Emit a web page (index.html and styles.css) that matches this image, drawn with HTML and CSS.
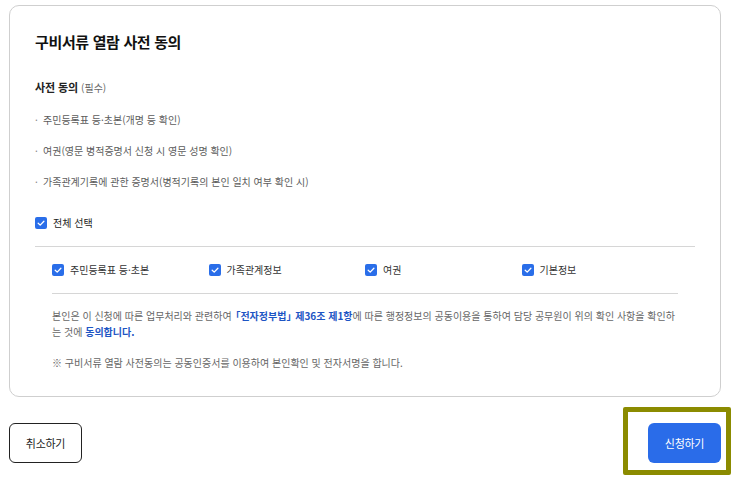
FILE: index.html
```html
<!DOCTYPE html>
<html lang="ko">
<head>
<meta charset="utf-8">
<title>구비서류 열람 사전 동의</title>
<link rel="stylesheet" href="styles.css">
</head>
<body>
<div class="page">
  <section class="card">
    <h1 class="title">구비서류 열람 사전 동의</h1>
    <h2 class="subtitle">사전 동의 <span class="req">(필수)</span></h2>
    <ul class="bullets">
      <li>주민등록표 등·초본(개명 등 확인)</li>
      <li>여권(영문 병적증명서 신청 시 영문 성명 확인)</li>
      <li>가족관계기록에 관한 증명서(병적기록의 본인 일치 여부 확인 시)</li>
    </ul>
    <label class="check all">
      <span class="box"><svg viewBox="0 0 12 12" width="12" height="12"><path d="M3.2 6.2 L5.2 8.1 L8.9 4.2" fill="none" stroke="#fff" stroke-width="1.3" stroke-linecap="round" stroke-linejoin="round"/></svg></span>
      <span>전체 선택</span>
    </label>
    <div class="divider"></div>
    <div class="sub">
      <div class="grid">
        <label class="check"><span class="box"><svg viewBox="0 0 12 12" width="12" height="12"><path d="M3.2 6.2 L5.2 8.1 L8.9 4.2" fill="none" stroke="#fff" stroke-width="1.3" stroke-linecap="round" stroke-linejoin="round"/></svg></span><span>주민등록표 등·초본</span></label>
        <label class="check"><span class="box"><svg viewBox="0 0 12 12" width="12" height="12"><path d="M3.2 6.2 L5.2 8.1 L8.9 4.2" fill="none" stroke="#fff" stroke-width="1.3" stroke-linecap="round" stroke-linejoin="round"/></svg></span><span>가족관계정보</span></label>
        <label class="check"><span class="box"><svg viewBox="0 0 12 12" width="12" height="12"><path d="M3.2 6.2 L5.2 8.1 L8.9 4.2" fill="none" stroke="#fff" stroke-width="1.3" stroke-linecap="round" stroke-linejoin="round"/></svg></span><span>여권</span></label>
        <label class="check"><span class="box"><svg viewBox="0 0 12 12" width="12" height="12"><path d="M3.2 6.2 L5.2 8.1 L8.9 4.2" fill="none" stroke="#fff" stroke-width="1.3" stroke-linecap="round" stroke-linejoin="round"/></svg></span><span>기본정보</span></label>
      </div>
      <div class="divider"></div>
      <p class="para">본인은 이 신청에 따른 업무처리와 관련하여 <b><span class="lb">「</span>전자정부법<span class="rb">」</span> 제36조 제1항</b>에 따른 행정정보의 공동이용을 통하여 담당 공무원이 위의 확인 사항을 확인하는 것에 <b>동의합니다.</b></p>
      <p class="note">※ 구비서류 열람 사전동의는 공동인증서를 이용하여 본인확인 및 전자서명을 합니다.</p>
    </div>
  </section>
  <div class="actions">
    <button class="btn cancel" type="button">취소하기</button>
    <div class="submit-wrap">
      <button class="btn submit" type="button">신청하기</button>
      <span class="highlight"></span>
    </div>
  </div>
</div>
</body>
</html>
```
FILE: styles.css
```css
* { box-sizing: border-box; }
html, body { margin: 0; padding: 0; background: #fff; }
body {
  font-family: "Noto Sans CJK KR", "Noto Sans", sans-serif;
  color: #222;
  min-height: 484px;
}
.page {
  padding: 5px 13px 0 9px;
}
.card {
  border: 1px solid #cfcfcf;
  border-radius: 10px;
  padding: 26px 25px 25px;
}
.title {
  margin: 0;
  font-size: 15px;
  line-height: 20px;
  font-weight: 700;
  letter-spacing: -0.35px;
  color: #111;
}
.subtitle {
  margin: 27px 0 0;
  font-size: 11px;
  line-height: 16px;
  font-weight: 700;
  letter-spacing: -0.1px;
  color: #222;
}
.req {
  font-size: 10px;
  font-weight: 400;
  letter-spacing: 0;
  color: #666;
}
.bullets {
  list-style: none;
  margin: 16px 0 0;
  padding: 0;
  display: flex;
  flex-direction: column;
  gap: 15px;
}
.bullets li {
  display: flex;
  font-size: 10px;
  line-height: 16px;
  letter-spacing: 0;
  color: #5c5c5c;
}
.bullets li::before {
  content: "·";
  width: 8px;
  flex: none;
  color: #888;
}
.check {
  display: flex;
  align-items: center;
  gap: 6px;
  font-size: 10px;
  line-height: 16px;
  letter-spacing: 0;
  color: #222;
}
.check.all { margin-top: 25px; }
.box {
  width: 12px;
  height: 12px;
  flex: none;
  border-radius: 2px;
  background: #2a6ee9;
  display: flex;
}
.divider {
  height: 1px;
  background: #d6d6d6;
  margin-top: 15px;
}
.sub {
  padding: 0 17px;
}
.grid {
  display: grid;
  grid-template-columns: repeat(4, 1fr);
  margin-top: 15px;
}
.grid .check { color: #333; }
.sub .divider { margin-top: 15px; }
.para {
  margin: 14px 0 0;
  font-size: 10px;
  line-height: 16px;
  letter-spacing: 0;
  color: #666;
}
.para b {
  color: #1d55c4;
  font-weight: 700;
}
.lb { margin-left: -4px; }
.rb { letter-spacing: -4px; }
.note {
  margin: 15px 0 0;
  font-size: 10px;
  line-height: 16px;
  letter-spacing: 0;
  color: #666;
}
.actions {
  display: flex;
  justify-content: space-between;
  margin-top: 26px;
}
.btn {
  width: 73px;
  height: 40px;
  border-radius: 6px;
  font-family: inherit;
  font-size: 11px;
  letter-spacing: -0.3px;
  padding: 0;
  cursor: pointer;
}
.cancel {
  background: #fff;
  border: 1px solid #222;
  color: #222;
}
.submit {
  background: #2a6ce9;
  border: none;
  color: #fff;
  display: block;
}
.submit-wrap {
  position: relative;
}
.highlight {
  position: absolute;
  left: -25px;
  top: -16px;
  width: 108px;
  height: 68px;
  border: 5px solid #8b8b00;
  border-radius: 2px;
  pointer-events: none;
}
```
